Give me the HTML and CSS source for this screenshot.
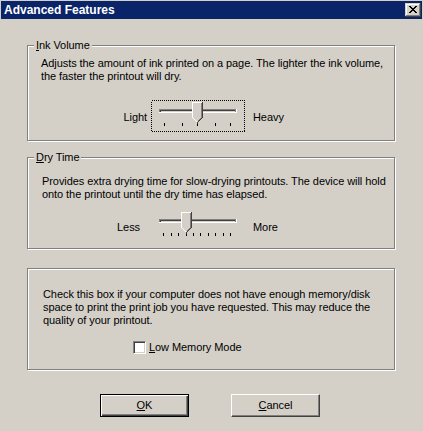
FILE: index.html
```html
<!DOCTYPE html>
<html>
<head>
<meta charset="utf-8">
<title>Advanced Features</title>
<link rel="stylesheet" href="styles.css">
</head>
<body>
<div class="window">
  <div class="titlebar">
    <span class="title">Advanced Features</span>
    <span class="close">
      <svg width="16" height="14" viewBox="0 0 16 14" shape-rendering="crispEdges">
        <rect x="0" y="0" width="16" height="14" fill="#d4d0c8"/>
        <rect x="0" y="13" width="16" height="1" fill="#404040"/>
        <rect x="15" y="0" width="1" height="14" fill="#404040"/>
        <rect x="1" y="1" width="14" height="1" fill="#ffffff"/>
        <rect x="1" y="1" width="1" height="12" fill="#ffffff"/>
        <rect x="1" y="12" width="14" height="1" fill="#808080"/>
        <rect x="14" y="1" width="1" height="12" fill="#808080"/>
        <g fill="#000">
          <rect x="4" y="3" width="2" height="1"/><rect x="10" y="3" width="2" height="1"/>
          <rect x="5" y="4" width="2" height="1"/><rect x="9" y="4" width="2" height="1"/>
          <rect x="6" y="5" width="4" height="1"/>
          <rect x="7" y="6" width="2" height="1"/>
          <rect x="6" y="7" width="4" height="1"/>
          <rect x="5" y="8" width="2" height="1"/><rect x="9" y="8" width="2" height="1"/>
          <rect x="4" y="9" width="2" height="1"/><rect x="10" y="9" width="2" height="1"/>
        </g>
      </svg>
    </span>
  </div>

  <div class="content">
    <div class="group group-ink">
      <div class="legend"><u>I</u>nk Volume</div>
      <div class="desc desc-ink">Adjusts the amount of ink printed on a page. The lighter the ink volume,<br>the faster the printout will dry.</div>
      <div class="slider-row slider-row-ink">
        <span class="slabel slabel-left">Light</span>
        <svg class="slider" width="94" height="32" viewBox="0 0 94 32" shape-rendering="crispEdges">
          <rect x="0.5" y="0.5" width="93" height="31" fill="none" stroke="#000" stroke-dasharray="1 1"/>
          <rect x="8" y="9" width="78" height="4" fill="#fff"/>
          <rect x="8" y="9" width="77" height="3" fill="#808080"/>
          <rect x="9" y="10" width="75" height="2" fill="#d4d0c8"/>
          <rect x="9" y="10" width="75" height="1" fill="#404040"/>
          <rect x="9" y="10" width="1" height="2" fill="#404040"/>
          <g fill="#000">
            <rect x="13" y="23" width="1" height="3"/>
            <rect x="31" y="23" width="1" height="3"/>
            <rect x="46" y="23" width="1" height="3"/>
            <rect x="64" y="23" width="1" height="3"/>
            <rect x="79" y="23" width="1" height="3"/>
          </g>
          <g transform="translate(41 2)">
            <polygon points="0,0 11,0 11,16 5.5,21.5 0,16" fill="#d4d0c8" shape-rendering="auto"/>
            <rect x="0" y="0" width="10" height="1" fill="#fff"/>
            <rect x="0" y="0" width="1" height="16" fill="#fff"/>
            <rect x="1" y="16" width="1" height="1" fill="#fff"/>
            <rect x="2" y="17" width="1" height="1" fill="#fff"/>
            <rect x="3" y="18" width="1" height="1" fill="#fff"/>
            <rect x="4" y="19" width="1" height="1" fill="#fff"/>
            <rect x="9" y="1" width="1" height="15" fill="#808080"/>
            <rect x="8" y="16" width="1" height="1" fill="#808080"/>
            <rect x="7" y="17" width="1" height="1" fill="#808080"/>
            <rect x="6" y="18" width="1" height="1" fill="#808080"/>
            <rect x="10" y="0" width="1" height="16" fill="#404040"/>
            <rect x="9" y="16" width="1" height="1" fill="#404040"/>
            <rect x="8" y="17" width="1" height="1" fill="#404040"/>
            <rect x="7" y="18" width="1" height="1" fill="#404040"/>
            <rect x="6" y="19" width="1" height="1" fill="#404040"/>
            <rect x="5" y="20" width="1" height="1" fill="#404040"/>
          </g>
        </svg>
        <span class="slabel slabel-right">Heavy</span>
      </div>
    </div>

    <div class="group group-dry">
      <div class="legend"><u>D</u>ry Time</div>
      <div class="desc desc-dry">Provides extra drying time for slow-drying printouts. The device will hold<br>onto the printout until the dry time has elapsed.</div>
      <div class="slider-row slider-row-dry">
        <span class="slabel slabel-left slabel-less">Less</span>
        <svg class="slider" width="94" height="32" viewBox="0 0 94 32" shape-rendering="crispEdges">
          <rect x="8" y="9" width="78" height="4" fill="#fff"/>
          <rect x="8" y="9" width="77" height="3" fill="#808080"/>
          <rect x="9" y="10" width="75" height="2" fill="#d4d0c8"/>
          <rect x="9" y="10" width="75" height="1" fill="#404040"/>
          <rect x="9" y="10" width="1" height="2" fill="#404040"/>
          <g fill="#000">
            <rect x="12" y="23" width="1" height="3"/>
            <rect x="20" y="23" width="1" height="3"/>
            <rect x="27" y="23" width="1" height="3"/>
            <rect x="35" y="23" width="1" height="3"/>
            <rect x="42" y="23" width="1" height="3"/>
            <rect x="49" y="23" width="1" height="3"/>
            <rect x="57" y="23" width="1" height="3"/>
            <rect x="64" y="23" width="1" height="3"/>
            <rect x="72" y="23" width="1" height="3"/>
            <rect x="79" y="23" width="1" height="3"/>
          </g>
          <g transform="translate(30 2)">
            <polygon points="0,0 11,0 11,16 5.5,21.5 0,16" fill="#d4d0c8" shape-rendering="auto"/>
            <rect x="0" y="0" width="10" height="1" fill="#fff"/>
            <rect x="0" y="0" width="1" height="16" fill="#fff"/>
            <rect x="1" y="16" width="1" height="1" fill="#fff"/>
            <rect x="2" y="17" width="1" height="1" fill="#fff"/>
            <rect x="3" y="18" width="1" height="1" fill="#fff"/>
            <rect x="4" y="19" width="1" height="1" fill="#fff"/>
            <rect x="9" y="1" width="1" height="15" fill="#808080"/>
            <rect x="8" y="16" width="1" height="1" fill="#808080"/>
            <rect x="7" y="17" width="1" height="1" fill="#808080"/>
            <rect x="6" y="18" width="1" height="1" fill="#808080"/>
            <rect x="10" y="0" width="1" height="16" fill="#404040"/>
            <rect x="9" y="16" width="1" height="1" fill="#404040"/>
            <rect x="8" y="17" width="1" height="1" fill="#404040"/>
            <rect x="7" y="18" width="1" height="1" fill="#404040"/>
            <rect x="6" y="19" width="1" height="1" fill="#404040"/>
            <rect x="5" y="20" width="1" height="1" fill="#404040"/>
          </g>
        </svg>
        <span class="slabel slabel-right">More</span>
      </div>
    </div>

    <div class="group group-mem">
      <div class="desc desc-mem">Check this box if your computer does not have enough memory/disk<br>space to print the print job you have requested. This may reduce the<br>quality of your printout.</div>
      <div class="check-row">
        <span class="checkbox"></span>
        <span class="check-label"><u>L</u>ow Memory Mode</span>
      </div>
    </div>

    <div class="buttons">
      <div class="btn btn-default"><u>O</u>K</div>
      <div class="btn"><u>C</u>ancel</div>
    </div>
  </div>
</div>
</body>
</html>
```

FILE: styles.css
```css
* { box-sizing: border-box; }

html, body {
  margin: 0;
  padding: 0;
  background: #d4d0c8;
}

body {
  font-family: "Liberation Sans", Arial, sans-serif;
  font-size: 11px;
  line-height: 13px;
  letter-spacing: -0.07px;
  color: #000;
}

.window {
  width: 423px;
  height: 431px;
  padding: 1px 1px 0 1px;
  background: #d4d0c8;
  overflow: hidden;
}

.titlebar {
  height: 18px;
  background: #0a246a;
  display: flex;
  align-items: center;
  justify-content: space-between;
  padding: 0 1px 0 3px;
}

.title {
  color: #fff;
  font-weight: bold;
  font-size: 12px;
  line-height: 14px;
  letter-spacing: 0;
  font-family: "Liberation Sans", Arial, sans-serif;
}

.close {
  display: flex;
  width: 16px;
  height: 14px;
}

.content {
  padding: 26px 0 0 26px;
}

.group {
  width: 368px;
  border: 1px solid #808080;
  box-shadow: inset 1px 1px 0 #fff, 1px 1px 0 #fff;
  display: flex;
  flex-direction: column;
  align-items: flex-start;
}

.legend {
  margin: -7px 0 0 6px;
  padding: 0 2px;
  background: #d4d0c8;
  white-space: nowrap;
}

.desc {
  white-space: nowrap;
}

.group-ink .desc-ink { margin: 5px 0 0 13px; }
.group-ink { padding-bottom: 8px; }
.slider-row-ink { margin-top: 17px; }

.group-dry { margin-top: 16px; padding-bottom: 6px; }
.group-dry .desc-dry { margin: 11px 0 0 14px; }
.slider-row-dry { margin-top: 9px; }

.slider-row {
  display: flex;
  align-items: center;
  padding-top: 2px;
  height: 32px;
}

.slider {
  display: block;
  margin-top: -2px;
}

.slabel-left {
  width: 123px;
  text-align: right;
  padding-right: 4px;
}

.slabel-less {
  padding-right: 11px;
}

.slabel-right {
  padding-left: 8px;
}

.group-mem {
  margin-top: 19px;
  padding: 19px 0 15px 0;
}

.desc-mem {
  margin-left: 15px;
}

.check-row {
  display: flex;
  align-items: center;
  margin: 14px 0 0 105px;
  height: 13px;
}

.checkbox {
  width: 13px;
  height: 13px;
  border: 1px solid;
  border-color: #808080 #fff #fff #808080;
  box-shadow: inset 1px 1px 0 #404040, inset -1px -1px 0 #d4d0c8;
  background: #fff;
}

.check-label {
  margin-left: 3px;
}

.buttons {
  display: flex;
  gap: 42px;
  margin: 24px 0 0 73px;
}

.btn {
  width: 89px;
  height: 23px;
  display: flex;
  align-items: center;
  justify-content: center;
  background: #d4d0c8;
  border: 1px solid;
  border-color: #fff #404040 #404040 #fff;
  box-shadow: inset -1px -1px 0 #808080, inset 1px 1px 0 #d4d0c8;
}

.btn-default {
  border: 1px solid #000;
  box-shadow: inset 1px 1px 0 #fff, inset -1px -1px 0 #404040, inset -2px -2px 0 #808080;
}

u {
  text-decoration: underline;
  text-underline-offset: 1px;
}
```
